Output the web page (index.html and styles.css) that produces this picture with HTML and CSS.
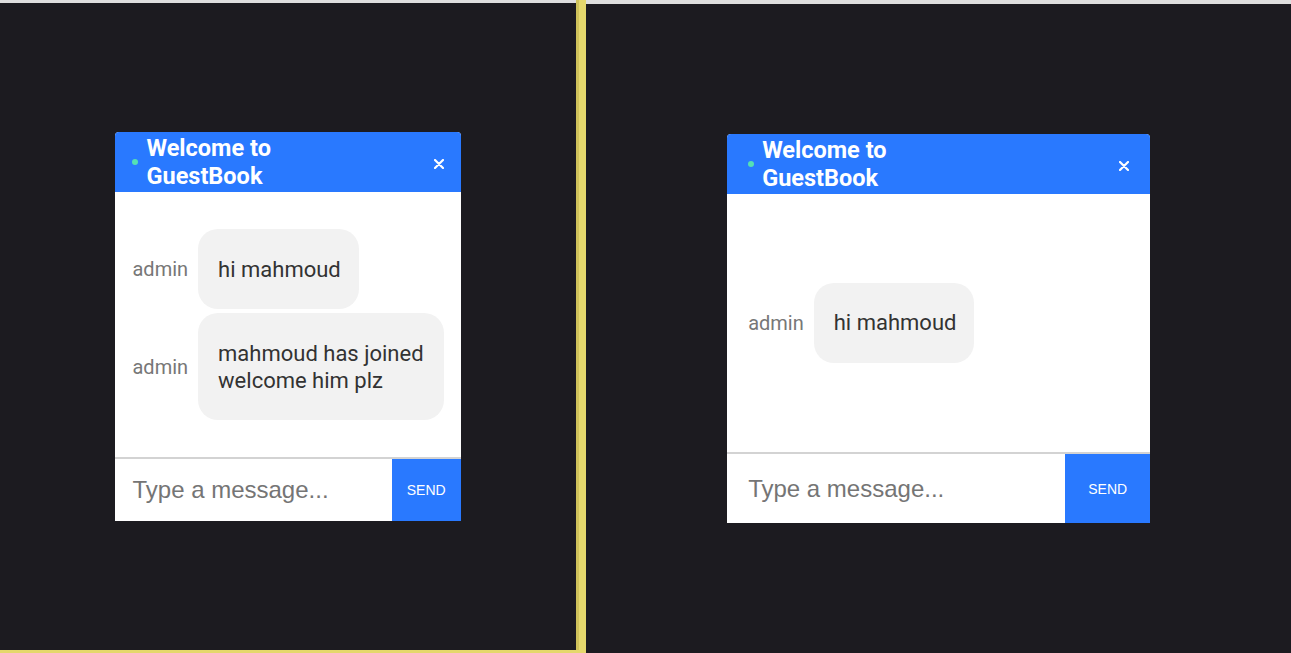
FILE: index.html
```html
<!DOCTYPE html>
<html lang="en">
<head>
<meta charset="utf-8">
<title>GuestBook</title>
<link rel="stylesheet" href="styles.css">
</head>
<body>
  <div class="pane pane-left">
    <div class="chat">
      <div class="chat-header">
        <span class="status-dot"></span>
        <h1 class="chat-title">Welcome to GuestBook</h1>
        <button class="close-btn" type="button" aria-label="Close">
          <svg width="10" height="10" viewBox="0 0 10 10"><path d="M1 1L9 9M9 1L1 9" stroke="#fff" stroke-width="2.2" stroke-linecap="round"/></svg>
        </button>
      </div>
      <div class="chat-body">
        <div class="msg"><span class="msg-user">admin</span><div class="bubble">hi mahmoud</div></div>
        <div class="msg"><span class="msg-user">admin</span><div class="bubble">mahmoud has joined welcome him plz</div></div>
      </div>
      <form class="chat-input">
        <input class="chat-field" type="text" placeholder="Type a message...">
        <button class="send-btn" type="button">SEND</button>
      </form>
    </div>
  </div>
  <div class="pane pane-right">
    <div class="chat">
      <div class="chat-header">
        <span class="status-dot"></span>
        <h1 class="chat-title">Welcome to GuestBook</h1>
        <button class="close-btn" type="button" aria-label="Close">
          <svg width="10" height="10" viewBox="0 0 10 10"><path d="M1 1L9 9M9 1L1 9" stroke="#fff" stroke-width="2.2" stroke-linecap="round"/></svg>
        </button>
      </div>
      <div class="chat-body">
        <div class="msg"><span class="msg-user">admin</span><div class="bubble">hi mahmoud</div></div>
      </div>
      <form class="chat-input">
        <input class="chat-field" type="text" placeholder="Type a message...">
        <button class="send-btn" type="button">SEND</button>
      </form>
    </div>
  </div>
</body>
</html>
```

FILE: styles.css
```css
* { box-sizing: border-box; }

html, body {
  margin: 0;
  height: 653px;
  overflow: hidden;
}

body {
  display: flex;
  align-items: flex-start;
  background: #e5d86c;
  font-family: Roboto, "Liberation Sans", Arial, sans-serif;
}

.pane {
  background: #1c1b20;
  display: flex;
  align-items: center;
  justify-content: center;
  box-sizing: content-box;
}

.pane-left {
  width: 576px;
  height: 647px;
  border-top: 3px solid #dedede;
  flex: none;
  box-shadow: 3px 0 0 #cfc25a;
}

.pane-right {
  flex: 1;
  height: 649px;
  margin-left: 10px;
  border-top: 4px solid #dedede;
}

.chat {
  width: 60%;
  height: 60%;
  display: flex;
  flex-direction: column;
  background: #fff;
  border-radius: 4px 4px 0 0;
}

.chat-header {
  height: 60px;
  flex: none;
  display: flex;
  align-items: center;
  padding: 0 5%;
  background: #2979ff;
  border-radius: 4px 4px 0 0;
}

.status-dot {
  width: 6px;
  height: 6px;
  border-radius: 50%;
  background: #55e0b4;
  flex: none;
  margin-right: 8px;
}

.chat-title {
  margin: 0;
  max-width: 140px;
  font-size: 23.5px;
  line-height: 28px;
  font-weight: 700;
  color: #fff;
}

.close-btn {
  margin-left: auto;
  margin-top: 4px;
  background: none;
  border: 0;
  padding: 0;
  width: 10px;
  height: 10px;
  display: flex;
}

.chat-body {
  flex: 1;
  min-height: 0;
  padding: 0 5%;
  display: flex;
  flex-direction: column;
  justify-content: center;
  gap: 4px;
}

.msg {
  display: flex;
  align-items: center;
}

.msg-user {
  flex: none;
  margin-right: 10px;
  font-size: 20px;
  color: #777;
}

.bubble {
  background: #f2f2f2;
  border-radius: 20px;
  padding: 26.5px 18px 26.5px 20px;
  font-size: 22px;
  line-height: 27px;
  color: #333;
}

.chat-input {
  flex: none;
  display: flex;
  margin: 0;
  border-top: 2px solid #d3d3d3;
}

.chat-field {
  flex: 1;
  min-width: 0;
  border: 0;
  outline: none;
  padding: 5%;
  font-family: "Liberation Sans", Arial, sans-serif;
  font-size: 24px;
  line-height: 27px;
  color: #333;
  background: #fff;
}

.chat-field::placeholder {
  color: #757575;
}

.send-btn {
  width: 20%;
  flex: none;
  border: 0;
  background: #2979ff;
  color: #fff;
  font-family: "Liberation Sans", Arial, sans-serif;
  font-size: 14px;
  padding: 0;
}
```
